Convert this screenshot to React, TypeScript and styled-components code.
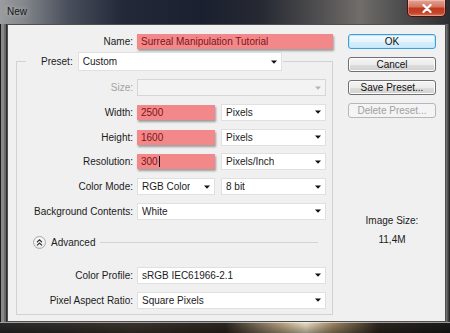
import React from 'react';
import styled, { createGlobalStyle, css } from 'styled-components';

const GlobalStyle = createGlobalStyle`
  html, body { margin: 0; padding: 0; }
  body {
    background: #111;
    font-family: "Liberation Sans", Arial, sans-serif;
    overflow: hidden;
  }
`;

const Window = styled.div`
  width: 450px;
  height: 333px;
  box-sizing: border-box;
  display: flex;
  flex-direction: column;
  padding: 0 4px 11px 7px;
  background:
    linear-gradient(90deg, #9a9c9f 0%, #85888c 5%, #4a4f5c 15%, #232939 27%, #1b2030 45%, #262932 58%, #4d4c4e 70%, #706d6a 80%, #4a4a4c 90%, #2d2e31 100%) top / 100% 24px no-repeat,
    linear-gradient(180deg, rgba(255, 255, 255, 0.55) 0 1px, rgba(0, 0, 0, 0) 1px, rgba(0, 0, 0, 0.35) 100%) bottom / 100% 11px no-repeat,
    linear-gradient(90deg, #2a2a2a 0%, #3a342c 30%, #2b2520 50%, #b9a584 63%, #e9dcc2 68%, #9b8562 74%, #2c2620 84%, #1a1a1a 100%) bottom / 100% 11px no-repeat,
    linear-gradient(90deg, #1c1c1c 0 1px, #8a8a8a 1px 4px, #6a6a6a 4px 6px, #2e2e2e 6px 7px) left / 7px 100% no-repeat,
    linear-gradient(90deg, #7a7a7a 0, #4a4a4a 2px, #1c1c1c 4px) right / 4px 100% no-repeat,
    #444;
`;

const TitleBar = styled.div`
  height: 24px;
  flex: none;
  display: flex;
  justify-content: space-between;
  align-items: flex-start;
`;

const Title = styled.div`
  font-size: 10px;
  line-height: 24px;
  color: #161616;
  text-shadow: 0 0 5px rgba(255, 255, 255, 0.5);
`;

const CloseButton = styled.div`
  width: 39px;
  height: 17px;
  box-sizing: border-box;
  border: 1px solid #4a1208;
  border-top: none;
  border-radius: 0 0 5px 5px;
  background: linear-gradient(180deg, #e4a393 0%, #d47661 42%, #bf3a20 52%, #c4432a 80%, #dd7558 100%);
  box-shadow: inset 0 0 0 1px rgba(255, 255, 255, 0.3);
  display: flex;
  align-items: center;
  justify-content: center;
`;

const Client = styled.div`
  flex: 1;
  display: flex;
  align-items: flex-start;
  box-sizing: border-box;
  background: #f0f0f0;
  border: 1px solid #505050;
  padding: 9px 0 0 8px;
  color: #1b1b1b;
  font-size: 10px;
`;

const LeftCol = styled.div`
  width: 317px;
  display: flex;
  flex-direction: column;
`;

const NameRow = styled.div`
  display: grid;
  grid-template-columns: 117px 196px;
  column-gap: 4px;
  align-items: center;
  height: 15px;
`;

const Label = styled.div<{ $disabled?: boolean }>`
  font-size: 10px;
  text-align: right;
  white-space: nowrap;
  color: ${(p) => (p.$disabled ? '#a3a3a3' : '#1b1b1b')};
`;

const PinkField = styled.div<{ $w?: number }>`
  ${(p) => (p.$w ? css`width: ${p.$w}px;` : css`width: 100%;`)}
  height: 15px;
  box-sizing: border-box;
  background: #f3888a;
  color: #7c1416;
  padding-left: 4px;
  box-shadow: 1px 2px 2px rgba(0, 0, 0, 0.35);
  display: flex;
  align-items: center;
  font-size: 10px;
  white-space: nowrap;
`;

const Caret = styled.span`
  display: inline-block;
  width: 1px;
  height: 11px;
  background: #111;
  margin-left: 1px;
`;

const Combo = styled.div<{ $w?: number; $h?: number; $disabled?: boolean }>`
  ${(p) => (p.$w ? css`width: ${p.$w}px;` : css`width: 100%;`)}
  height: ${(p) => p.$h ?? 17}px;
  box-sizing: border-box;
  background: ${(p) => (p.$disabled ? '#f3f3f3' : '#ffffff')};
  border: 1px solid ${(p) => (p.$disabled ? '#d6d6d6' : '#e0e0e0')};
  padding: 0 4px 0 4px;
  display: flex;
  align-items: center;
  justify-content: space-between;
  font-size: 10px;
  color: #1b1b1b;
  white-space: nowrap;
`;

const ComboText = styled.span`
  overflow: hidden;
`;

const GroupBox = styled.fieldset`
  margin: 3px 0 0 0;
  width: 317px;
  min-width: 0;
  box-sizing: border-box;
  border: 1px solid #cfd3d6;
  padding: 8px 6px 5px 0;
`;

const Legend = styled.legend`
  margin-left: 9px;
  padding: 0 1px 0 15px;
  height: 19px;
  display: flex;
  align-items: center;
  gap: 5px;
`;

const Rows = styled.div`
  display: flex;
  flex-direction: column;
  gap: 7.8px;
`;

const Row = styled.div`
  display: grid;
  grid-template-columns: 116px 189px;
  column-gap: 4px;
  align-items: center;
  height: 17px;
`;

const Pair = styled.div`
  display: flex;
  align-items: center;
  justify-content: space-between;
`;

const AdvancedRow = styled.div`
  display: flex;
  align-items: center;
  gap: 5px;
  height: 14px;
  margin: 16px 8px 17px 16px;
`;

const RoundButton = styled.div`
  width: 13px;
  height: 13px;
  box-sizing: border-box;
  border-radius: 50%;
  border: 1px solid #a9a9a9;
  background: radial-gradient(circle at 50% 35%, #ffffff 0%, #f1f1f1 55%, #dcdcdc 100%);
  display: flex;
  align-items: center;
  justify-content: center;
`;

const Rule = styled.div`
  flex: 1;
  height: 1px;
  background: #d3d3d3;
`;

const RightCol = styled.div`
  margin-left: 15px;
  width: 88px;
  display: flex;
  flex-direction: column;
`;

const ButtonStack = styled.div`
  display: flex;
  flex-direction: column;
  gap: 8px;
`;

type Variant = 'default' | 'primary' | 'disabled';

const Button = styled.div<{ $variant?: Variant }>`
  height: 15px;
  box-sizing: border-box;
  border-radius: 3px;
  display: flex;
  align-items: center;
  justify-content: center;
  font-size: 10px;
  white-space: nowrap;
  ${(p) =>
    p.$variant === 'primary'
      ? css`
          border: 1px solid #3d9fd6;
          background: linear-gradient(180deg, #f3fafe 0%, #e6f4fc 50%, #d6eefa 51%, #cde9f8 100%);
          box-shadow: inset 0 0 0 1px #bfe6fb;
          color: #111;
        `
      : p.$variant === 'disabled'
      ? css`
          border: 1px solid #b5b8ba;
          background: #f4f4f4;
          color: #a0a0a0;
        `
      : css`
          border: 1px solid #707070;
          background: linear-gradient(180deg, #f4f4f4 0%, #ececec 50%, #dedede 51%, #d0d0d0 100%);
          box-shadow: inset 0 0 0 1px #fbfbfb;
          color: #111;
        `}
`;

const Info = styled.div`
  margin-top: 97px;
  display: flex;
  flex-direction: column;
  align-items: center;
  gap: 7px;
  font-size: 10px;
  line-height: 12px;
  color: #1b1b1b;
`;

const Arrow: React.FC<{ disabled?: boolean }> = ({ disabled }) => (
  <svg width="6" height="4" viewBox="0 0 6 4" style={{ flex: 'none' }}>
    <polygon points="0,0.5 6,0.5 3,3.8" fill={disabled ? '#b4b4b4' : '#111'} />
  </svg>
);

const CloseGlyph = () => (
  <svg width="10" height="9" viewBox="0 0 10 9">
    <path d="M1.5 1 L8.5 8 M8.5 1 L1.5 8" stroke="#ffffff" strokeWidth="2.2" strokeLinecap="round" />
  </svg>
);

const ChevronsUp = () => (
  <svg width="9" height="9" viewBox="0 0 9 9">
    <path d="M2 4.2 L4.5 1.8 L7 4.2 M2 7.4 L4.5 5 L7 7.4" stroke="#333" strokeWidth="1.2" fill="none" />
  </svg>
);

const Select: React.FC<{ value: string; w?: number; h?: number; disabled?: boolean }> = ({
  value,
  w,
  h,
  disabled,
}) => (
  <Combo $w={w} $h={h} $disabled={disabled}>
    <ComboText>{value}</ComboText>
    <Arrow disabled={disabled} />
  </Combo>
);

export default function App() {
  return (
    <>
      <GlobalStyle />
      <Window>
        <TitleBar>
          <Title>New</Title>
          <CloseButton>
            <CloseGlyph />
          </CloseButton>
        </TitleBar>
        <Client>
          <LeftCol>
            <NameRow>
              <Label>Name:</Label>
              <PinkField>Surreal Manipulation Tutorial</PinkField>
            </NameRow>
            <GroupBox>
              <Legend>
                <Label>Preset:</Label>
                <Select value="Custom" w={204} h={19} />
              </Legend>
              <Rows>
                <Row>
                  <Label $disabled>Size:</Label>
                  <Select value="" disabled />
                </Row>
                <Row>
                  <Label>Width:</Label>
                  <Pair>
                    <PinkField $w={78}>2500</PinkField>
                    <Select value="Pixels" w={105} />
                  </Pair>
                </Row>
                <Row>
                  <Label>Height:</Label>
                  <Pair>
                    <PinkField $w={78}>1600</PinkField>
                    <Select value="Pixels" w={105} />
                  </Pair>
                </Row>
                <Row>
                  <Label>Resolution:</Label>
                  <Pair>
                    <PinkField $w={78}>
                      300
                      <Caret />
                    </PinkField>
                    <Select value="Pixels/Inch" w={105} />
                  </Pair>
                </Row>
                <Row>
                  <Label>Color Mode:</Label>
                  <Pair>
                    <Select value="RGB Color" w={78} />
                    <Select value="8 bit" w={105} />
                  </Pair>
                </Row>
                <Row>
                  <Label>Background Contents:</Label>
                  <Select value="White" />
                </Row>
              </Rows>
              <AdvancedRow>
                <RoundButton>
                  <ChevronsUp />
                </RoundButton>
                <span>Advanced</span>
                <Rule />
              </AdvancedRow>
              <Rows>
                <Row>
                  <Label>Color Profile:</Label>
                  <Select value="sRGB IEC61966-2.1" />
                </Row>
                <Row>
                  <Label>Pixel Aspect Ratio:</Label>
                  <Select value="Square Pixels" />
                </Row>
              </Rows>
            </GroupBox>
          </LeftCol>
          <RightCol>
            <ButtonStack>
              <Button $variant="primary">OK</Button>
              <Button>Cancel</Button>
              <Button>Save Preset...</Button>
              <Button $variant="disabled">Delete Preset...</Button>
            </ButtonStack>
            <Info>
              <span>Image Size:</span>
              <span>11,4M</span>
            </Info>
          </RightCol>
        </Client>
      </Window>
    </>
  );
}
